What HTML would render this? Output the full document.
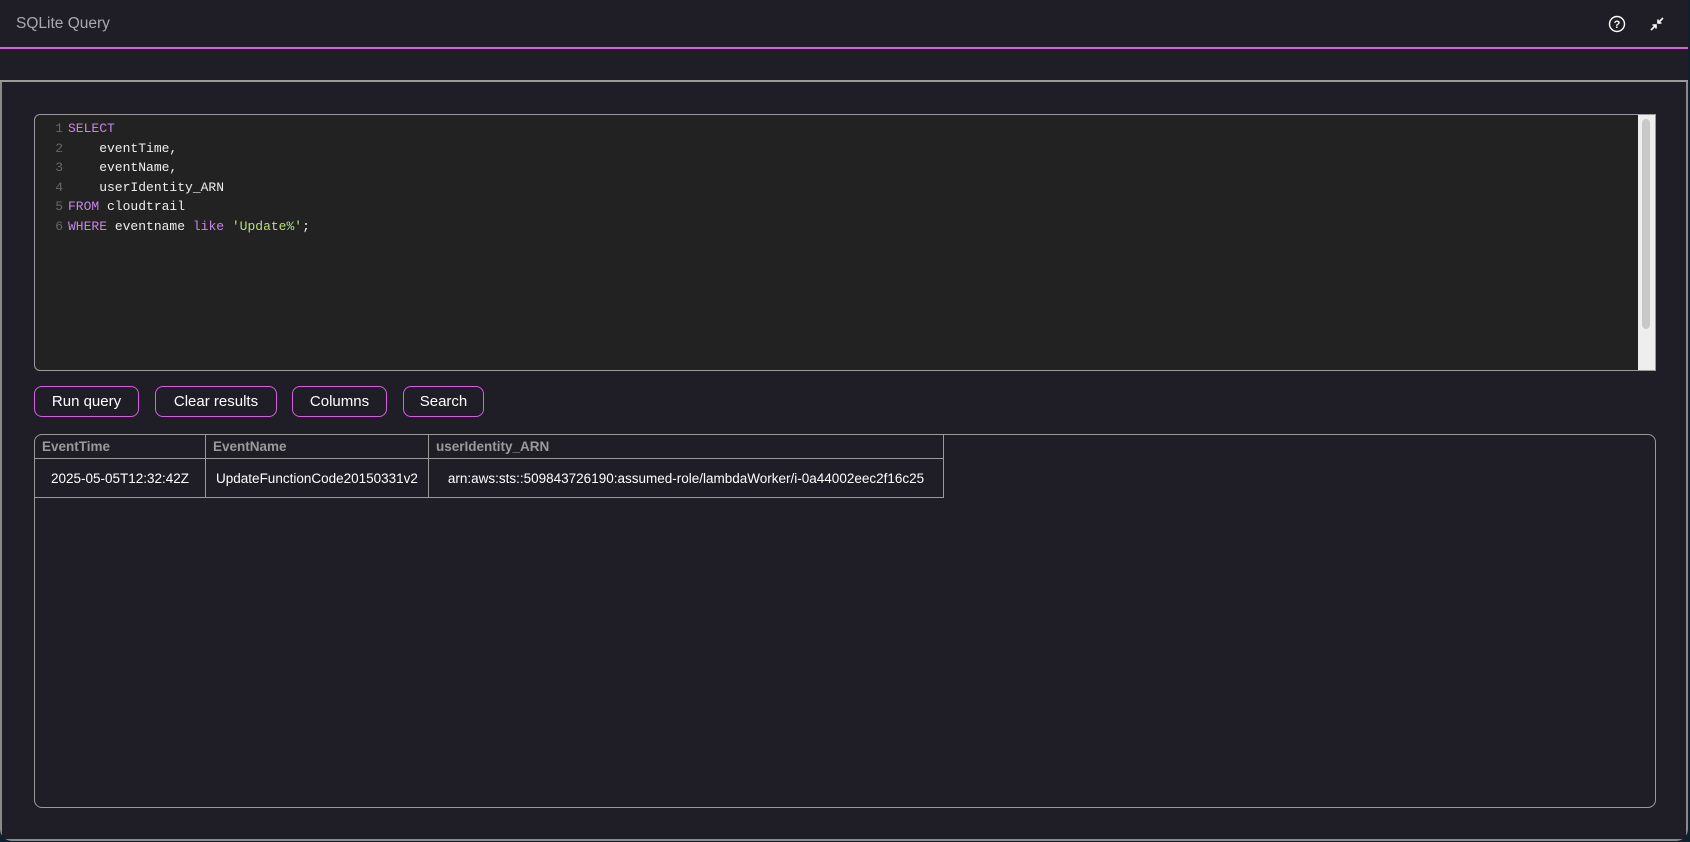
<!DOCTYPE html>
<html><head><meta charset="utf-8"><style>
html,body{margin:0;padding:0;width:1690px;height:842px;overflow:hidden;background:#0d2030;font-family:"Liberation Sans",sans-serif}
.panel{position:absolute;left:0;top:0;width:1688px;height:841px;background:#1f1e27;border-radius:0 0 12px 12px;overflow:hidden}
.title{position:absolute;left:16px;top:15px;font-size:15.5px;color:#a9a9ad}
.pink{position:absolute;left:0;top:47px;width:1690px;height:2px;background:#d65ee0}
.gray{position:absolute;left:0;top:80px;width:1690px;height:2px;background:#9a9a9a}
.lb{position:absolute;left:0;top:82px;width:2px;height:760px;background:#8a8a8a}
.rb{position:absolute;right:0;top:82px;width:2px;height:760px;background:#8a8a8a}
.bb{position:absolute;left:0;top:839px;width:1688px;height:2px;background:#8a8a8a}
.editor{position:absolute;left:34px;top:114px;width:1620px;height:255px;background:#222;border:1px solid #9a9a9a;border-radius:6px 0 0 6px;font-family:"Liberation Mono",monospace;font-size:13px;color:#eee}
.ln{position:absolute;left:0;width:28px;text-align:right;color:#666}
.code{position:absolute;left:33px;white-space:pre}
.k{color:#c586e8}.s{color:#b5e07c}
.sb{position:absolute;right:0;top:0;width:17px;height:255px;background:#eee}
.sb div{position:absolute;left:4px;top:4px;width:8px;height:210px;background:#c8c8c8;border-radius:4px}
.btn{position:absolute;top:386px;height:29px;border:1px solid #d65ee0;border-radius:8px;color:#fff;font-size:15px;line-height:29px;text-align:center}
.res{position:absolute;left:34px;top:434px;width:1620px;height:372px;border:1px solid #9a9a9a;border-radius:8px}
table{position:absolute;left:0;top:0;border-collapse:collapse;font-size:13.5px}
td,th{border:1px solid #9a9a9a;padding:0 7px}
th{height:23px;color:#9a9a9a;text-align:left;font-weight:bold;border-top:none}
th:first-child,td:first-child{border-left:none}
td{height:38px;color:#fff;text-align:center}
</style></head><body>
<div class="panel">
<div class="title">SQLite Query</div>
<svg style="position:absolute;left:1608px;top:15px" width="18" height="18" viewBox="0 0 18 18"><circle cx="9" cy="9" r="7.5" fill="none" stroke="#fff" stroke-width="1.4"/><text x="9" y="13.2" text-anchor="middle" font-family="Liberation Sans" font-weight="bold" font-size="11" fill="#fff">?</text></svg>
<svg style="position:absolute;left:1649px;top:16px" width="16" height="16" viewBox="0 0 16 16" stroke="#fff" stroke-width="1.6" fill="none"><path d="M2 14L7 9M3.5 9H7V12.5"/><path d="M14 2L9 7M9 3.5V7H12.5"/></svg>
<div class="pink"></div><div class="gray"></div><div class="lb"></div><div class="rb"></div><div class="bb"></div>
<div class="editor">
<div class="ln" style="top:6px">1</div><div class="code" style="top:6px"><span class="k">SELECT</span></div>
<div class="ln" style="top:25.5px">2</div><div class="code" style="top:25.5px">    eventTime,</div>
<div class="ln" style="top:45px">3</div><div class="code" style="top:45px">    eventName,</div>
<div class="ln" style="top:64.5px">4</div><div class="code" style="top:64.5px">    userIdentity_ARN</div>
<div class="ln" style="top:84px">5</div><div class="code" style="top:84px"><span class="k">FROM</span> cloudtrail</div>
<div class="ln" style="top:103.5px">6</div><div class="code" style="top:103.5px"><span class="k">WHERE</span> eventname <span class="k">like</span> <span class="s">'Update%'</span>;</div>
<div class="sb"><div></div></div>
</div>
<div class="btn" style="left:34px;width:103px">Run query</div>
<div class="btn" style="left:155px;width:120px">Clear results</div>
<div class="btn" style="left:292px;width:93px">Columns</div>
<div class="btn" style="left:403px;width:79px">Search</div>
<div class="res"><table>
<tr><th style="width:156px">EventTime</th><th style="width:208px">EventName</th><th style="width:500px">userIdentity_ARN</th></tr>
<tr><td>2025-05-05T12:32:42Z</td><td>UpdateFunctionCode20150331v2</td><td>arn:aws:sts::509843726190:assumed-role/lambdaWorker/i-0a44002eec2f16c25</td></tr>
</table></div>
</div>
</body></html>
